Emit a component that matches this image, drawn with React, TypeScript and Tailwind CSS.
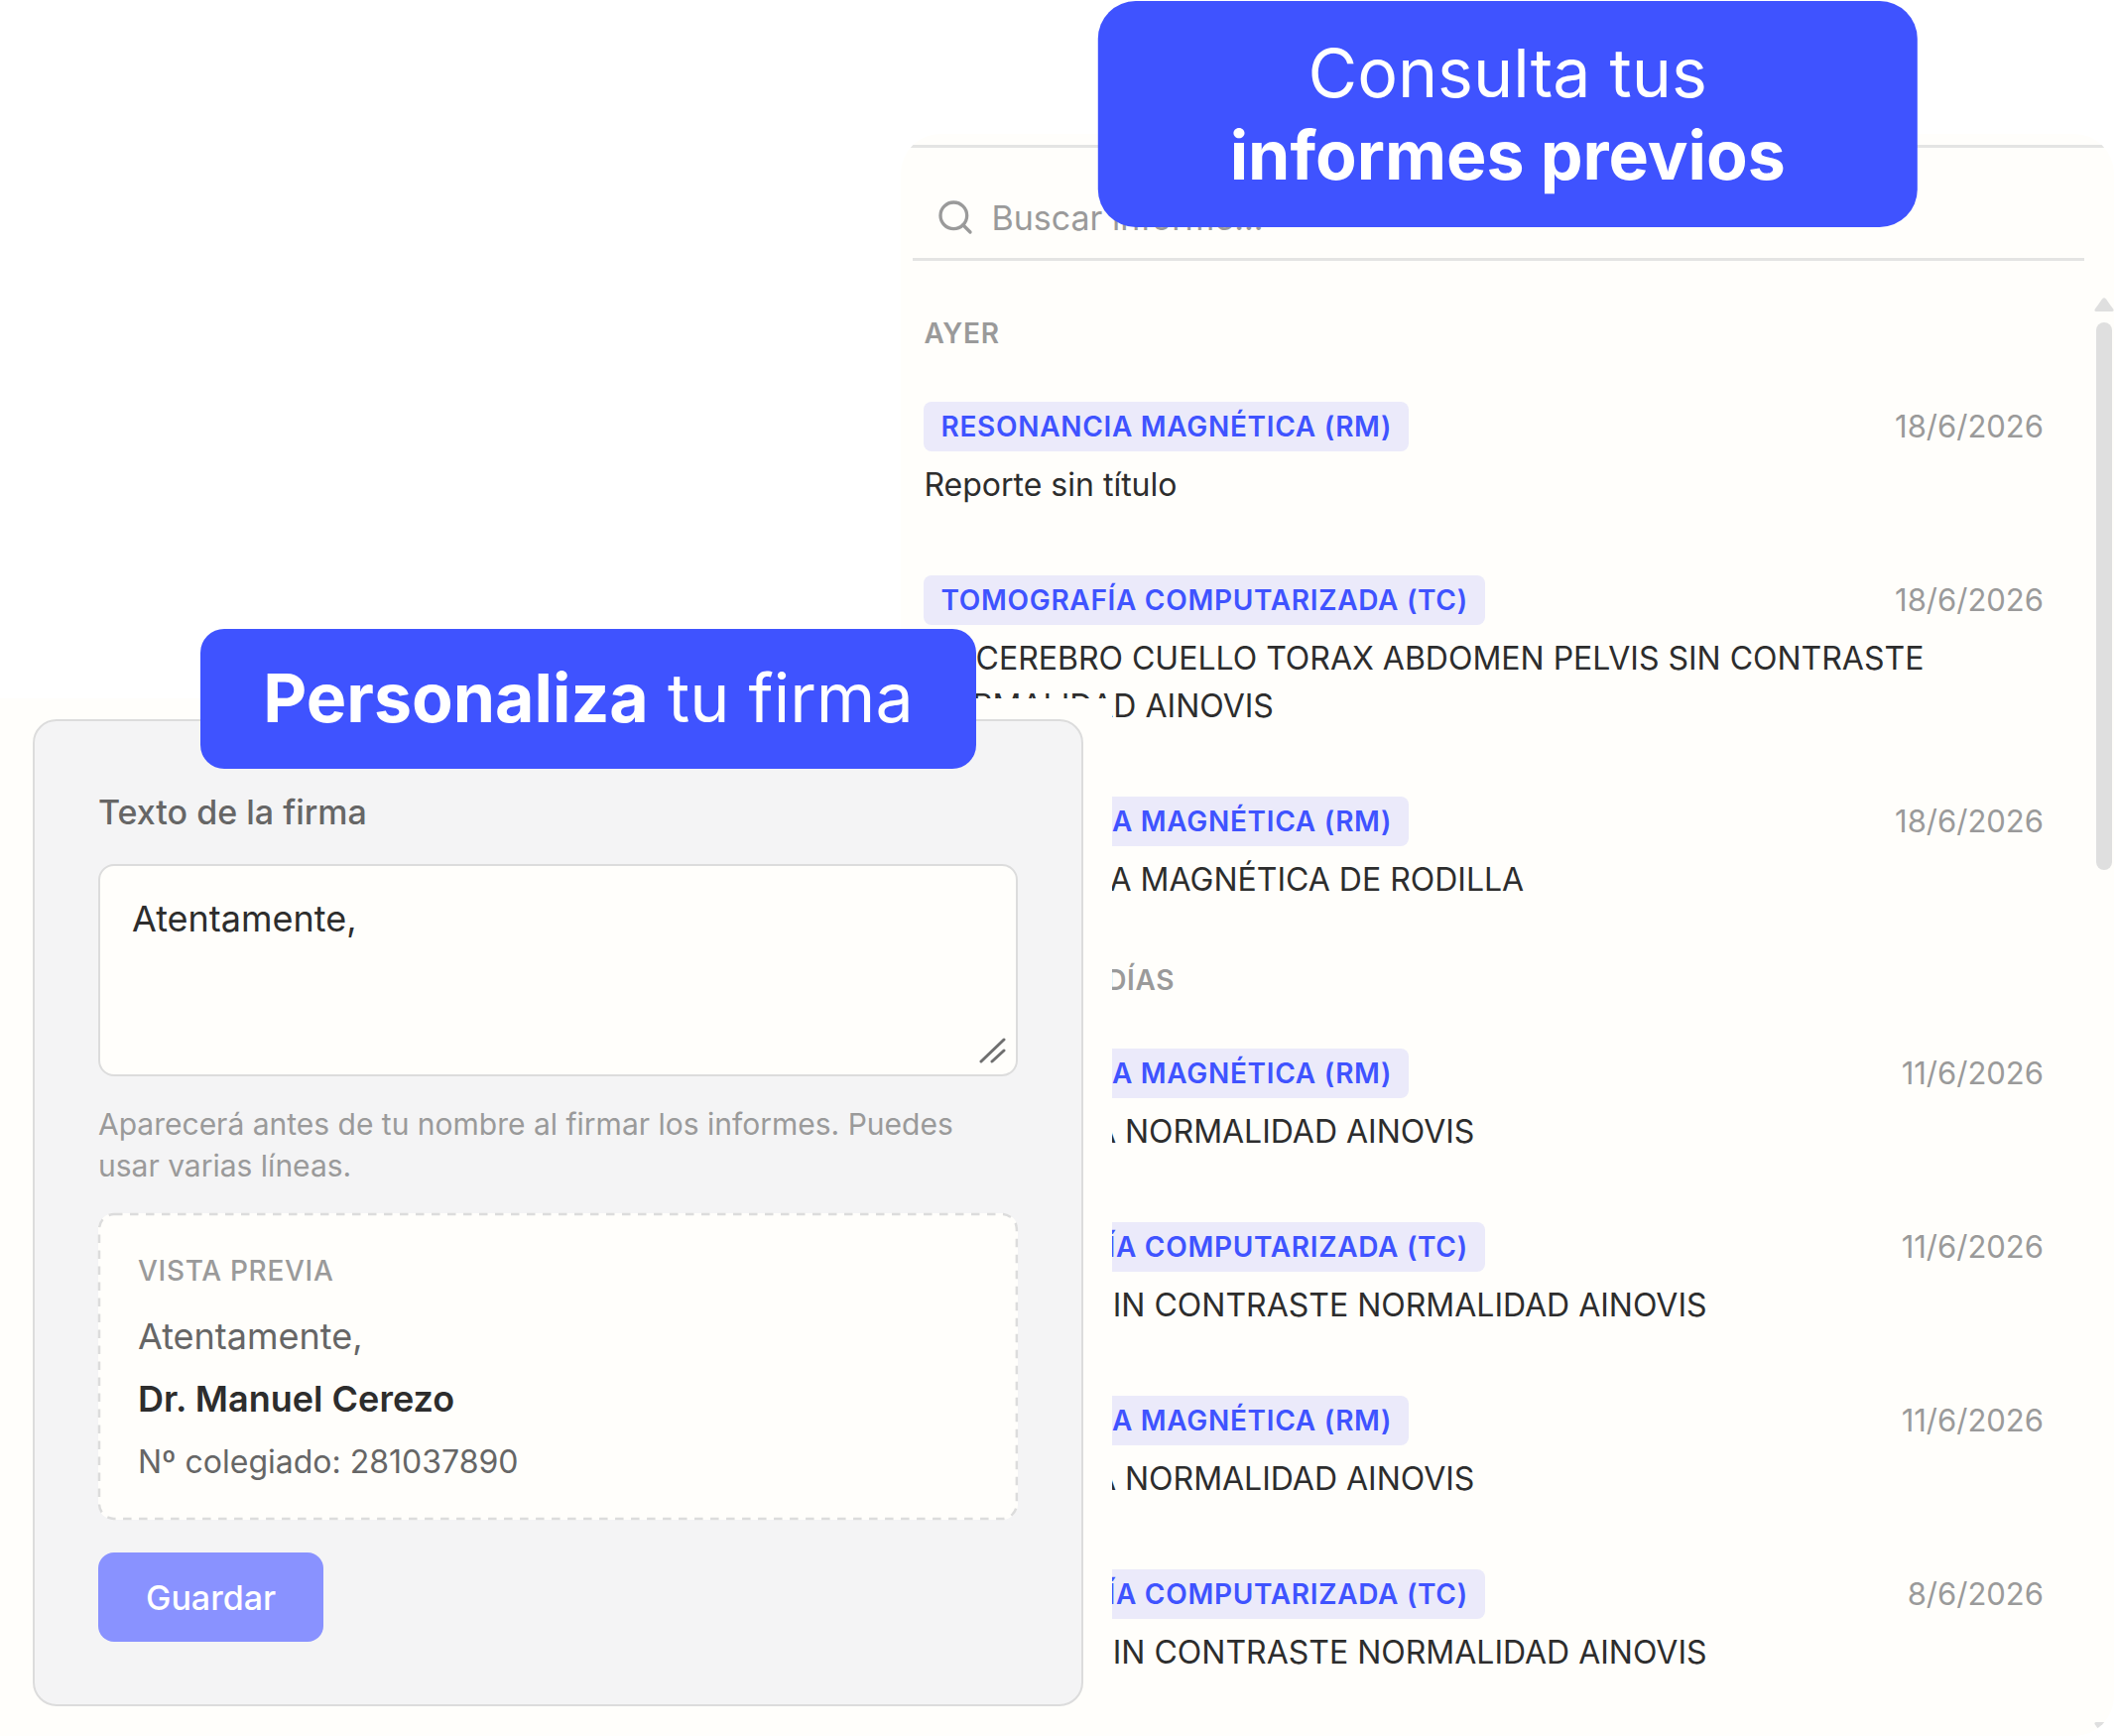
import { Search } from "lucide-react";

type Report = { id: number; kind: string; date: string; title: string };

const MRI = "Resonancia magnética (RM)";
const CT = "Tomografía computarizada (TC)";

const groups: { label: string; reports: Report[] }[] = [
  {
    label: "Ayer",
    reports: [
      { id: 1, kind: MRI, date: "18/6/2026", title: "Reporte sin título" },
      {
        id: 2,
        kind: CT,
        date: "18/6/2026",
        title: "TC CEREBRO CUELLO TORAX ABDOMEN PELVIS SIN CONTRASTE NORMALIDAD AINOVIS",
      },
      { id: 3, kind: MRI, date: "18/6/2026", title: "RESONANCIA MAGNÉTICA DE RODILLA" },
    ],
  },
  {
    label: "Últimos 30 días",
    reports: [
      { id: 4, kind: MRI, date: "11/6/2026", title: "RM RODILLA NORMALIDAD AINOVIS" },
      { id: 5, kind: CT, date: "11/6/2026", title: "TC TORAX SIN CONTRASTE NORMALIDAD AINOVIS" },
      { id: 6, kind: MRI, date: "11/6/2026", title: "RM RODILLA NORMALIDAD AINOVIS" },
      { id: 7, kind: CT, date: "8/6/2026", title: "TC TORAX SIN CONTRASTE NORMALIDAD AINOVIS" },
    ],
  },
];

function ReportItem({ report }: { report: Report }) {
  return (
    <li>
      <div className="flex items-center justify-between">
        <span className="flex h-[50px] items-center rounded-lg bg-[#ebeafa] px-[17px] text-[28px] font-semibold uppercase tracking-wide text-[#3f53ff]">
          {report.kind}
        </span>
        <time className="text-[31px] text-[#9a9a9a]">{report.date}</time>
      </div>
      <h3 className="mt-[10px] text-[32px] leading-[48px] text-[#2d2d2d]">{report.title}</h3>
    </li>
  );
}

// Scroll track with its two arrows and the thumb
function ScrollBar() {
  return (
    <div className="flex w-5 shrink-0 flex-col items-center pt-[37px]" aria-hidden>
      <svg width="20" height="14" viewBox="0 0 20 14" fill="#dfdfdf">
        <path d="M8 1.5Q10 -1 12 1.5L19.5 12Q20 14 18 14H2Q0 14 .5 12Z" />
      </svg>
      <div className="mt-[11px] h-[552px] w-4 rounded-full bg-[#dfdfdf]" />
      <svg className="mt-auto" width="20" height="14" viewBox="0 0 20 14" fill="#dfdfdf">
        <path d="M8 12.5Q10 15 12 12.5L19.5 2Q20 0 18 0H2Q0 0 .5 2Z" />
      </svg>
    </div>
  );
}

function ReportsPanel() {
  return (
    <section className="relative mr-1 ml-[42.55%] pt-[135px] [grid-area:1/1]">
      <div className="flex h-full flex-col overflow-hidden rounded-[40px] bg-[#fffefb] pt-[11px]">
        <div className="border-t-3 border-[#e4e4e3]">
          <label className="mr-[30px] ml-3 flex h-[114px] items-center gap-4 border-b-3 border-[#e4e4e3] pt-[29px] pl-[23px]">
            <Search className="size-10 shrink-0 text-[#9a9a9a]" strokeWidth={2} />
            <input
              type="search"
              placeholder="Buscar informe..."
              aria-label="Buscar informe"
              className="w-full bg-transparent text-[34px] outline-none placeholder:text-[#9a9a9a]"
            />
          </label>
        </div>
        <div className="flex flex-1">
          <div className="flex-1 pt-[53px] pr-[51px] pb-[60px] pl-[23px]">
            {groups.map((group) => (
              <section key={group.label} className="mb-[57px] last:mb-0">
                <h2 className="mb-[49px] text-[28px] leading-10 font-semibold uppercase tracking-wide text-[#9a9a9a]">
                  {group.label}
                </h2>
                <ul className="flex flex-col gap-[67px]">
                  {group.reports.map((report) => (
                    <ReportItem key={report.id} report={report} />
                  ))}
                </ul>
              </section>
            ))}
          </div>
          <ScrollBar />
        </div>
      </div>
      <p className="absolute top-px left-1/2 flex h-[228px] w-[67.6%] -translate-x-1/2 flex-col items-center justify-center rounded-[38px] bg-[#3f53ff] text-[68px] leading-[83px] text-white">
        <span>Consulta tus</span>
        <strong className="font-bold">informes previos</strong>
      </p>
    </section>
  );
}

function SignatureCard() {
  return (
    <section className="relative w-[52.5%] self-end bg-[#fffefb] pt-[21px] pr-[29px] pb-[30px] pl-[33px] [grid-area:1/1]">
      <form className="rounded-3xl border-2 border-[#dcdcdc] bg-[#f4f4f5] px-16 pt-[68px] pb-[63px]">
        <label htmlFor="signature" className="block text-[34px] leading-[48px] font-medium text-[#666666]">
          Texto de la firma
        </label>
        <div className="relative mt-7">
          <textarea
            id="signature"
            defaultValue="Atentamente,"
            className="block h-[214px] w-full resize-none rounded-2xl border-2 border-[#dcdcdc] bg-[#fffefb] px-8 pt-[26px] text-[36px] leading-[54px] text-[#2d2d2d] outline-none"
          />
          <svg
            className="absolute right-3 bottom-3"
            width="28"
            height="28"
            viewBox="0 0 28 28"
            stroke="#6f6f6f"
            strokeWidth="3"
            strokeLinecap="round"
            aria-hidden
          >
            <path d="M3 25L26 3M14 25L26 14" />
          </svg>
        </div>
        <p className="mt-[27px] text-[30px] leading-[42px] text-[#9a9a9a]">
          Aparecerá antes de tu nombre al firmar los informes. Puedes usar varias líneas.
        </p>
        <div className="relative mt-[27px] rounded-2xl bg-[#fffefb] px-10 pt-[38px] pb-[27px] text-[36px] leading-[63px] text-[#666666]">
          {/* dashes longer than the ones border-dashed gives */}
          <svg className="absolute inset-0 size-full overflow-visible p-px" fill="none" stroke="#dcdcdc" aria-hidden>
            <rect width="100%" height="100%" rx="15" strokeWidth="2.5" strokeDasharray="8.5 7.5" />
          </svg>
          <h3 className="mb-[15px] text-[28px] leading-10 font-medium uppercase tracking-wide text-[#9a9a9a]">
            Vista previa
          </h3>
          <p>Atentamente,</p>
          <p className="font-semibold text-[#2d2d2d]">Dr. Manuel Cerezo</p>
          <p className="text-[32px] leading-[63px]">Nº colegiado: 281037890</p>
        </div>
        <button
          type="button"
          className="mt-[33px] h-[90px] rounded-2xl bg-[#8992ff] px-12 text-[34px] font-medium text-white"
        >
          Guardar
        </button>
      </form>
      <p className="absolute -top-[70px] left-[18%] flex h-[141px] w-[69.8%] items-center justify-center rounded-3xl bg-[#3f53ff] pb-1 text-[68px] whitespace-pre text-white">
        <strong className="font-bold">Personaliza</strong> tu firma
      </p>
    </section>
  );
}

export default function App() {
  return (
    <main className="grid min-h-screen bg-white font-['Inter',sans-serif]">
      <ReportsPanel />
      <SignatureCard />
    </main>
  );
}
